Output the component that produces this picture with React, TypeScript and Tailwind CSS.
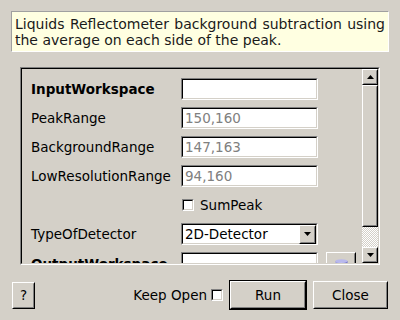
import React from 'react';

const sunken = 'border border-t-[#808080] border-l-[#808080] border-r-white border-b-white';
const sunkenInner = 'border border-t-black border-l-black border-r-[#d4d0c8] border-b-[#d4d0c8]';
const raised = 'border border-t-white border-l-white border-r-black border-b-black';
const raisedInner = 'border border-t-[#d4d0c8] border-l-[#d4d0c8] border-r-[#808080] border-b-[#808080]';

const Field = ({ value }: { value?: string }) => (
  <div className={`w-[137px] h-[22px] ${sunken}`}>
    <div className={`h-full bg-white ${sunkenInner} flex items-center pl-[2px] text-[#808080]`}>
      {value}
    </div>
  </div>
);

const CheckBox = () => (
  <div className={`w-[12px] h-[12px] ${sunken}`}>
    <div className={`h-full bg-white ${sunkenInner}`}></div>
  </div>
);

const Arrow = ({ up }: { up?: boolean }) => (
  <svg width="7" height="4" viewBox="0 0 7 4">
    {up ? <path d="M3.5 0 L7 4 L0 4 Z" fill="#000" /> : <path d="M0 0 L7 0 L3.5 4 Z" fill="#000" />}
  </svg>
);

const ScrollButton = ({ up }: { up?: boolean }) => (
  <div className={`w-[16px] h-[16px] bg-[#d4d0c8] ${raised}`}>
    <div className={`h-full ${raisedInner} flex items-center justify-center`}>
      <Arrow up={up} />
    </div>
  </div>
);

const Row = ({ label, bold, children }: { label?: string; bold?: boolean; children: React.ReactNode }) => (
  <div className="flex items-center h-[22px] shrink-0">
    <div className={`w-[150px] text-black whitespace-nowrap ${bold ? 'font-bold' : ''}`}>{label}</div>
    {children}
  </div>
);

const Button = ({ label, w, isDefault }: { label: string; w: string; isDefault?: boolean }) => (
  <div className={`${w} ${isDefault ? 'h-[30px] border border-black' : 'h-[28px]'}`}>
    <div className={`h-full bg-[#d4d0c8] ${raised}`}>
      <div className={`h-full ${raisedInner} flex items-center justify-center text-black`}>{label}</div>
    </div>
  </div>
);

export default function App() {
  return (
    <div className="w-[400px] h-[320px] bg-[#d4d0c8] overflow-hidden pt-[11px] px-[11px] text-[13.5px] leading-[16px] text-black font-['DejaVu_Sans',sans-serif]">
      <div className="w-[378px] h-[41px] bg-[#ffffe1] border border-t-[#a0a0a0] border-l-[#a0a0a0] border-r-white border-b-white pl-[3px] pr-[3px] pt-[4px] text-justify text-[14px] text-[#1a1a1a]">
        Liquids Reflectometer background subtraction using the average on each side of the peak.
      </div>
      <div className={`mt-[15px] ml-[9px] w-[360px] h-[198px] ${sunken}`}>
        <div className={`h-full ${sunkenInner} flex`}>
          <div className="flex-1 overflow-hidden pl-[9px] pt-[9px] flex flex-col gap-[7px]">
            <Row label="InputWorkspace" bold>
              <Field />
            </Row>
            <Row label="PeakRange">
              <Field value="150,160" />
            </Row>
            <Row label="BackgroundRange">
              <Field value="147,163" />
            </Row>
            <Row label="LowResolutionRange">
              <Field value="94,160" />
            </Row>
            <Row>
              <div className="flex items-center gap-[6px] pl-px">
                <CheckBox />
                <span>SumPeak</span>
              </div>
            </Row>
            <Row label="TypeOfDetector">
              <div className={`w-[137px] h-[22px] ${sunken}`}>
                <div className={`h-full bg-white ${sunkenInner} flex items-center pl-[2px]`}>
                  <span className="flex-1">2D-Detector</span>
                  <div className={`w-[17px] h-[19px] bg-[#d4d0c8] ${raised}`}>
                    <div className={`h-full ${raisedInner} flex items-center justify-center`}>
                      <Arrow />
                    </div>
                  </div>
                </div>
              </div>
            </Row>
            <div className="flex items-start h-[22px] shrink-0">
              <div className="w-[150px] font-bold pt-[4px] whitespace-nowrap">OutputWorkspace</div>
              <Field />
              <div className={`ml-[8px] w-[30px] h-[22px] bg-[#d4d0c8] ${raised}`}>
                <div className={`h-full ${raisedInner} flex justify-center pt-[5px]`}>
                  <svg width="13" height="8" viewBox="0 0 13 8">
                    <defs>
                      <linearGradient id="disk" x1="0" y1="0" x2="1" y2="0">
                        <stop offset="0" stopColor="#9a9ae0" />
                        <stop offset="0.5" stopColor="#d0d0f4" />
                        <stop offset="1" stopColor="#6a6ac8" />
                      </linearGradient>
                    </defs>
                    <rect x="0.5" y="2" width="12" height="6" fill="url(#disk)" />
                    <ellipse cx="6.5" cy="2" rx="6" ry="1.8" fill="#b8b8ec" />
                  </svg>
                </div>
              </div>
            </div>
          </div>
          <div className="w-[16px] flex flex-col bg-[#d4d0c8]">
            <ScrollButton up />
            <div className={`h-[142px] ${raised}`}>
              <div className={`h-full ${raisedInner}`}></div>
            </div>
            <div className="flex-1 bg-[repeating-conic-gradient(#ffffff_0_25%,#d4d0c8_0_50%)] bg-[length:2px_2px]"></div>
            <ScrollButton />
          </div>
        </div>
      </div>
      <div className="mt-[15px] flex items-center h-[30px]">
        <div className="ml-px w-[23px] h-[27px]">
          <div className={`h-full bg-[#d4d0c8] ${raised}`}>
            <div className={`h-full ${raisedInner} flex items-center justify-center`}>?</div>
          </div>
        </div>
        <div className="flex-1"></div>
        <span>Keep Open</span>
        <div className="ml-[4px]">
          <CheckBox />
        </div>
        <div className="ml-[6px]">
          <Button label="Run" w="w-[78px]" isDefault />
        </div>
        <div className="ml-[6px] mr-px">
          <Button label="Close" w="w-[75px]" />
        </div>
      </div>
    </div>
  );
}
